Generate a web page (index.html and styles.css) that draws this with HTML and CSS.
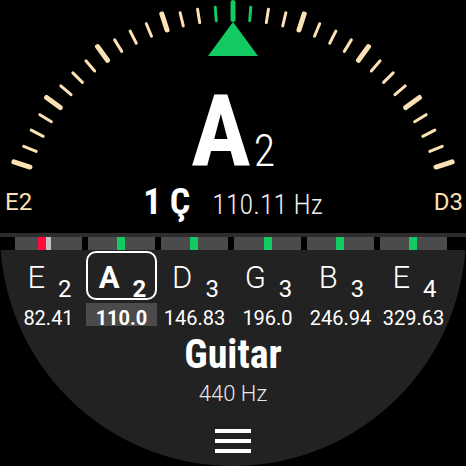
FILE: index.html
```html
<!DOCTYPE html>
<html lang="en">
<head>
  <meta charset="UTF-8" />
  <meta name="viewport" content="width=device-width, initial-scale=1.0" />
  <title>Tuner</title>
  <link rel="stylesheet" href="styles.css">
</head>
<body>
  <div class="screen">
    <div class="dial">
      <svg class="gauge" id="gauge" width="466" height="233" viewBox="0 0 466 233">
        <polygon class="pointer" points="233,22 208,56 258,56" />
      </svg>
      <span class="range range-low">E2</span>
      <span class="range range-high">D3</span>
      <div class="note">A<span class="octave">2</span></div>
      <div class="reading"><b class="cents">1 Ç</b><span class="hz">110.11 Hz</span></div>
    </div>

    <div class="divider"></div>

    <div class="meters">
      <div class="meter"><i class="mark red" style="left:23px"></i><i class="mark grey" style="left:31px"></i></div>
      <div class="meter"><i class="mark" style="left:29px"></i></div>
      <div class="meter"><i class="mark" style="left:29px"></i></div>
      <div class="meter"><i class="mark" style="left:30px"></i></div>
      <div class="meter"><i class="mark" style="left:29px"></i></div>
      <div class="meter"><i class="mark" style="left:29px"></i></div>
    </div>

    <div class="panel">
      <div class="strings">
        <div class="string">
          <div class="name">E<sub>2</sub></div>
          <div class="freq">82.41</div>
        </div>
        <div class="string active">
          <div class="name">A<sub>2</sub></div>
          <div class="freq">110.0</div>
        </div>
        <div class="string">
          <div class="name">D<sub>3</sub></div>
          <div class="freq">146.83</div>
        </div>
        <div class="string">
          <div class="name">G<sub>3</sub></div>
          <div class="freq">196.0</div>
        </div>
        <div class="string">
          <div class="name">B<sub>3</sub></div>
          <div class="freq">246.94</div>
        </div>
        <div class="string">
          <div class="name">E<sub>4</sub></div>
          <div class="freq">329.63</div>
        </div>
      </div>

      <div class="instrument">Guitar</div>
      <div class="pitch">440 Hz</div>

      <div class="menu">
        <span></span><span></span><span></span>
      </div>
    </div>
  </div>

  <script>
    const gauge = document.getElementById("gauge");
    const pointer = gauge.querySelector(".pointer");

    // 33 ticks, 4.5 degrees apart, a long one every 4
    for (let i = -16; i <= 16; i++) {
      const major = i % 4 === 0;
      const tick = document.createElementNS("http://www.w3.org/2000/svg", "line");
      tick.setAttribute("x1", 233);
      tick.setAttribute("x2", 233);
      tick.setAttribute("y1", major ? 2.5 : 6.5);
      tick.setAttribute("y2", major ? 19.5 : 20);
      tick.setAttribute("transform", `rotate(${i * 4.5} 233 233)`);
      let cls = major ? "tick major" : "tick";
      if (Math.abs(i) <= 1) cls += " in-tune";
      tick.setAttribute("class", cls);
      gauge.insertBefore(tick, pointer);
    }
  </script>
</body>
</html>
```

FILE: styles.css
```css
body { margin: 0; background: #000; font-family: Roboto, "Noto Sans", sans-serif; color: #fff; }
.screen { width: 466px; height: 466px; border-radius: 50%; overflow: hidden; background: #000; display: flex; flex-direction: column; }

.dial { position: relative; height: 233px; text-align: center; flex-shrink: 0; }
.gauge { position: absolute; top: 0; left: 0; }
.tick { stroke: #fbe1b3; stroke-width: 3; stroke-linecap: round; }
.tick.major { stroke-width: 5; }
.tick.in-tune { stroke: #13c961; }
.pointer { fill: #13c961; }

.range { position: absolute; top: 190px; font-size: 24px; line-height: 24px; font-weight: 400; color: #fbe1b3; }
.range-low { left: 5px; }
.range-high { right: 3px; }

.note { position: relative; padding-top: 82px; font-size: 100px; line-height: 100px; font-weight: 700; font-stretch: 87.5%; }
.note .octave { font-size: 44px; line-height: 0; font-weight: 300; margin-left: 3px; }
.reading { position: relative; margin-top: 2px; font-size: 28px; line-height: 36px; }
.cents { font-size: 36px; font-weight: 700; font-stretch: 87.5%; }
.hz { font-weight: 300; font-stretch: 87.5%; margin-left: 22px; color: #eee; }

.divider { height: 4px; background: #2d2d2d; flex-shrink: 0; }
.meters { display: flex; gap: 6px; padding-left: 15px; height: 13px; flex-shrink: 0; }
.meter { position: relative; width: 67px; background: #4b4b4b; }
.mark { position: absolute; top: 0; width: 8px; height: 13px; background: #13c961; }
.mark.red { background: #ff0a3c; }
.mark.grey { width: 5px; background: #c4c4c4; }

.panel { flex: 1; background: #222; text-align: center; }
.strings { display: grid; grid-template-columns: repeat(6, 71px); column-gap: 2px; padding: 1px 13px 0; }
.name { height: 45px; line-height: 50px; font-size: 31px; font-weight: 300; padding-left: 2px; border: 2px solid transparent; border-radius: 10px; }
.name sub { font-size: 24px; font-weight: 400; line-height: 0; vertical-align: -9px; margin-left: 13px; }
.freq { margin-top: 3px; height: 23px; line-height: 30px; font-size: 20px; }
.active .name { border-color: #fff; font-weight: 700; }
.active .name sub { font-weight: 700; }
.active .freq { background: #4b4b4b; font-weight: 700; }

.instrument { margin-top: 9px; font-size: 40px; line-height: 40px; font-weight: 700; font-stretch: 87.5%; }
.pitch { margin-top: 8px; font-size: 22px; line-height: 22px; font-weight: 300; color: #e6e6e6; }

.menu { display: flex; flex-direction: column; align-items: center; gap: 6px; margin-top: 24px; }
.menu span { width: 36px; height: 4px; background: #fff; }
```
